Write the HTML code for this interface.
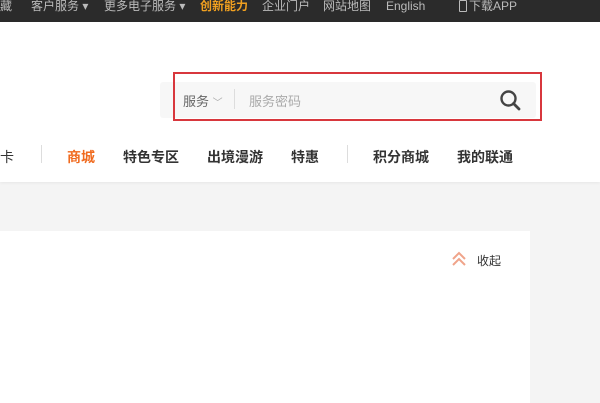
<!DOCTYPE html>
<html><head><meta charset="utf-8"><style>
*{margin:0;padding:0;box-sizing:border-box}
body{width:600px;height:403px;overflow:hidden;background:#f4f4f4;font-family:"Liberation Sans","Noto Sans CJK SC",sans-serif;position:relative}
.top{position:absolute;left:0;top:0;width:600px;height:22px;background:#2b2b2b;color:#bbb;font-size:12px;line-height:13px}
.top span{position:absolute;top:0;white-space:nowrap}
.hdr{position:absolute;left:0;top:22px;width:600px;height:160px;background:#fff;box-shadow:0 1px 3px rgba(0,0,0,.06)}
.sbg{position:absolute;left:160px;top:82px;width:376px;height:36px;background:#f7f7f7;border-radius:3px}
.red{position:absolute;left:173px;top:72px;width:369px;height:49px;border:2px solid #d8373d}
.nav{position:absolute;top:147px;font-size:14px;font-weight:bold;color:#333;white-space:nowrap}
.sep{position:absolute;top:145px;width:1px;height:18px;background:#ddd}
.card{position:absolute;left:0;top:231px;width:530px;height:172px;background:#fff}
</style></head><body>
<div class="top">
<span style="left:-12px">收藏</span>
<span style="left:31px">客户服务 ▾</span>
<span style="left:104px">更多电子服务 ▾</span>
<span style="left:200px;color:#f0a020;font-weight:bold">创新能力</span>
<span style="left:262px">企业门户</span>
<span style="left:323px">网站地图</span>
<span style="left:386px">English</span>
<span style="left:459px"><span style="display:inline-block;width:8px;height:12px;border:1px solid #bbb;border-radius:1px;position:static;vertical-align:-2px;margin-right:2px"></span>下载APP</span>
</div>
<div class="hdr"></div>
<div class="sbg"></div>
<div style="position:absolute;left:183px;top:91px;font-size:13px;color:#666">服务 <span style="font-size:10px;color:#aaa">﹀</span></div>
<div style="position:absolute;left:234px;top:89px;width:1px;height:20px;background:#ddd"></div>
<div style="position:absolute;left:249px;top:91px;font-size:13px;color:#aaa">服务密码</div>
<svg style="position:absolute;left:499px;top:89px" width="22" height="22" viewBox="0 0 22 22"><circle cx="9.5" cy="9.5" r="7" fill="none" stroke="#444" stroke-width="2.4"/><path d="M14.5 14.5L20 20" stroke="#444" stroke-width="2.8" stroke-linecap="round"/></svg>
<div class="red"></div>
<div class="nav" style="left:0;font-weight:normal">卡</div>
<div class="sep" style="left:41px"></div>
<div class="nav" style="left:67px;color:#f06a1e">商城</div>
<div class="nav" style="left:123px">特色专区</div>
<div class="nav" style="left:207px">出境漫游</div>
<div class="nav" style="left:291px">特惠</div>
<div class="sep" style="left:347px"></div>
<div class="nav" style="left:373px">积分商城</div>
<div class="nav" style="left:457px">我的联通</div>
<div class="card"></div>
<svg style="position:absolute;left:451px;top:250px" width="16" height="18" viewBox="0 0 16 18"><path d="M2 9L8 3L14 9M2 15L8 9L14 15" fill="none" stroke="#f0a48a" stroke-width="2"/></svg>
<div style="position:absolute;left:477px;top:252px;font-size:12px;color:#333">收起</div>
</body></html>
